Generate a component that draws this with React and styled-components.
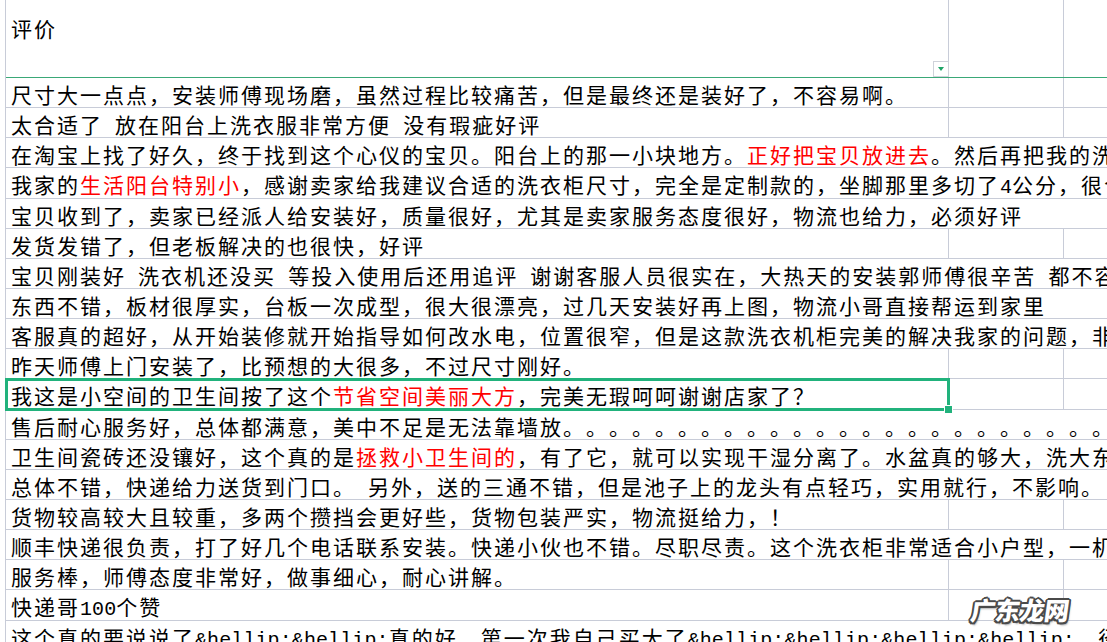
import React from "react";
import styled, { createGlobalStyle } from "styled-components";

const gridLine = "#c8ccd8";
const green = "#21b27c";

const GlobalStyle = createGlobalStyle`
  html, body {
    margin: 0;
    padding: 0;
    background: #fff;
    overflow: hidden;
  }
`;

const Page = styled.div`
  position: relative;
  width: 1107px;
  height: 642px;
  overflow: hidden;
  box-sizing: border-box;
  padding-left: 5px;
  background: #fff;
  font-family: "Noto Sans CJK SC", "Noto Sans CJK TC", sans-serif;
  font-size: 21px;
  letter-spacing: 2px;
  text-spacing-trim: space-all;
  text-autospace: no-autospace;
  color: #000;
`;

const Sheet = styled.div`
  border-left: 1px solid ${gridLine};
`;

const Row = styled.div`
  display: grid;
  grid-template-columns: 943px 115px 1fr;
  height: ${({ $header }) => ($header ? "78px" : "30.15px")};
  box-sizing: border-box;
  border-bottom: 1px solid ${({ $header }) => ($header ? "#3aa877" : gridLine)};
`;

const Cell = styled.div`
  position: relative;
  box-sizing: border-box;
  min-width: 0;
  padding: ${({ $header }) => ($header ? "18px 0 0 5px" : "6px 0 0 5px")};
  line-height: 21px;
  white-space: pre;
  border-right: ${({ $last }) => ($last ? "none" : `1px solid ${gridLine}`)};
  ${({ $span }) => $span && "grid-column: 1 / -1; overflow: hidden;"}
`;

const Latin = styled.span`
  font-family: "Liberation Mono", monospace;
  font-size: 20px;
  letter-spacing: 0.1px;
`;

const Red = styled.span`
  color: #ff0000;
`;

const FilterButton = styled.div`
  position: absolute;
  right: -1px;
  bottom: 0;
  width: 16px;
  height: 16px;
  box-sizing: border-box;
  border: 1px solid #cfd2da;
  background: #fff;
  display: flex;
  align-items: center;
  justify-content: center;

  &::after {
    content: "";
    width: 0;
    height: 0;
    border-left: 3px solid transparent;
    border-right: 3px solid transparent;
    border-top: 4px solid #1fa466;
    margin-top: -1px;
  }
`;

const Selection = styled.span`
  position: absolute;
  top: -1px;
  left: -1px;
  right: -2px;
  bottom: -2px;
  border: 3px solid ${green};
  pointer-events: none;
`;

const Handle = styled.span`
  position: absolute;
  right: -6px;
  bottom: -6px;
  width: 7px;
  height: 7px;
  background: ${green};
  border: 1px solid #fff;
`;

const Watermark = styled.div`
  position: absolute;
  left: 971px;
  top: 597px;
  font-size: 25px;
  line-height: 25px;
  font-weight: 900;
  letter-spacing: -0.5px;
  color: #fff;
  transform: skewX(-8deg);
  text-shadow:
    -1.5px -1.5px 0 #4a4a4a,
    1.5px -1.5px 0 #4a4a4a,
    -1.5px 1.5px 0 #4a4a4a,
    1.5px 1.5px 0 #4a4a4a,
    0 -2px 0 #4a4a4a,
    0 2px 0 #4a4a4a,
    -2px 0 0 #4a4a4a,
    2px 0 0 #4a4a4a,
    2px 3px 2px rgba(0, 0, 0, 0.35);
`;

const rows = [
  ["尺寸大一点点，安装师傅现场磨，虽然过程比较痛苦，但是最终还是装好了，不容易啊。"],
  ["太合适了 放在阳台上洗衣服非常方便 没有瑕疵好评"],
  [
    "在淘宝上找了好久，终于找到这个心仪的宝贝。阳台上的那一小块地方。",
    { red: "正好把宝贝放进去" },
    "。然后再把我的洗衣机放进去",
  ],
  [
    "我家的",
    { red: "生活阳台特别小" },
    "，感谢卖家给我建议合适的洗衣柜尺寸，完全是定制款的，坐脚那里多切了4公分，很合适",
  ],
  ["宝贝收到了，卖家已经派人给安装好，质量很好，尤其是卖家服务态度很好，物流也给力，必须好评"],
  ["发货发错了，但老板解决的也很快，好评"],
  ["宝贝刚装好 洗衣机还没买 等投入使用后还用追评 谢谢客服人员很实在，大热天的安装郭师傅很辛苦 都不容易"],
  ["东西不错，板材很厚实，台板一次成型，很大很漂亮，过几天安装好再上图，物流小哥直接帮运到家里"],
  ["客服真的超好，从开始装修就开始指导如何改水电，位置很窄，但是这款洗衣机柜完美的解决我家的问题，非常感谢"],
  ["昨天师傅上门安装了，比预想的大很多，不过尺寸刚好。"],
  ["我这是小空间的卫生间按了这个", { red: "节省空间美丽大方" }, "，完美无瑕呵呵谢谢店家了？"],
  ["售后耐心服务好，总体都满意，美中不足是无法靠墙放。" + "。".repeat(30)],
  [
    "卫生间瓷砖还没镶好，这个真的是",
    { red: "拯救小卫生间的" },
    "，有了它，就可以实现干湿分离了。水盆真的够大，洗大东西",
  ],
  ["总体不错，快递给力送货到门口。 另外，送的三通不错，但是池子上的龙头有点轻巧，实用就行，不影响。"],
  ["货物较高较大且较重，多两个攒挡会更好些，货物包装严实，物流挺给力，！"],
  ["顺丰快递很负责，打了好几个电话联系安装。快递小伙也不错。尽职尽责。这个洗衣柜非常适合小户型，一机两用"],
  ["服务棒，师傅态度非常好，做事细心，耐心讲解。"],
  ["快递哥100个赞"],
  [
    "这个真的要说说了&hellip;&hellip;真的好，第一次我自己买大了&hellip;&hellip;&hellip;&hellip;，径直",
  ],
];

const SELECTED = 10;
const COL_A_CHARS = 40.5;

// split a string into CJK runs and half-width ASCII runs
const renderText = (text, keyBase) =>
  text.split(/([\x20-\x7e]+)/).map((part, i) =>
    /^[\x20-\x7e]+$/.test(part) ? (
      <Latin key={`${keyBase}-${i}`}>{part}</Latin>
    ) : (
      part
    )
  );

const renderSegments = (segments) =>
  segments.map((seg, i) =>
    typeof seg === "string" ? (
      <React.Fragment key={i}>{renderText(seg, i)}</React.Fragment>
    ) : (
      <Red key={i}>{renderText(seg.red, i)}</Red>
    )
  );

const textLength = (segments) =>
  segments
    .map((s) => (typeof s === "string" ? s : s.red))
    .join("")
    .split("")
    .reduce((n, ch) => n + (/[\x20-\x7e]/.test(ch) ? 0.53 : 1), 0);

const DataRow = ({ segments, selected }) => {
  const overflows = textLength(segments) > COL_A_CHARS;
  if (overflows) {
    return (
      <Row>
        <Cell $span $last>
          {renderSegments(segments)}
        </Cell>
      </Row>
    );
  }
  return (
    <Row>
      <Cell>
        {renderSegments(segments)}
        {selected && (
          <Selection>
            <Handle />
          </Selection>
        )}
      </Cell>
      <Cell />
      <Cell $last />
    </Row>
  );
};

export default function App() {
  return (
    <>
      <GlobalStyle />
      <Page>
        <Sheet>
          <Row $header>
            <Cell $header>
              评价
              <FilterButton />
            </Cell>
            <Cell $header />
            <Cell $header $last />
          </Row>
          {rows.map((segments, i) => (
            <DataRow key={i} segments={segments} selected={i === SELECTED} />
          ))}
        </Sheet>
        <Watermark>广东龙网</Watermark>
      </Page>
    </>
  );
}
